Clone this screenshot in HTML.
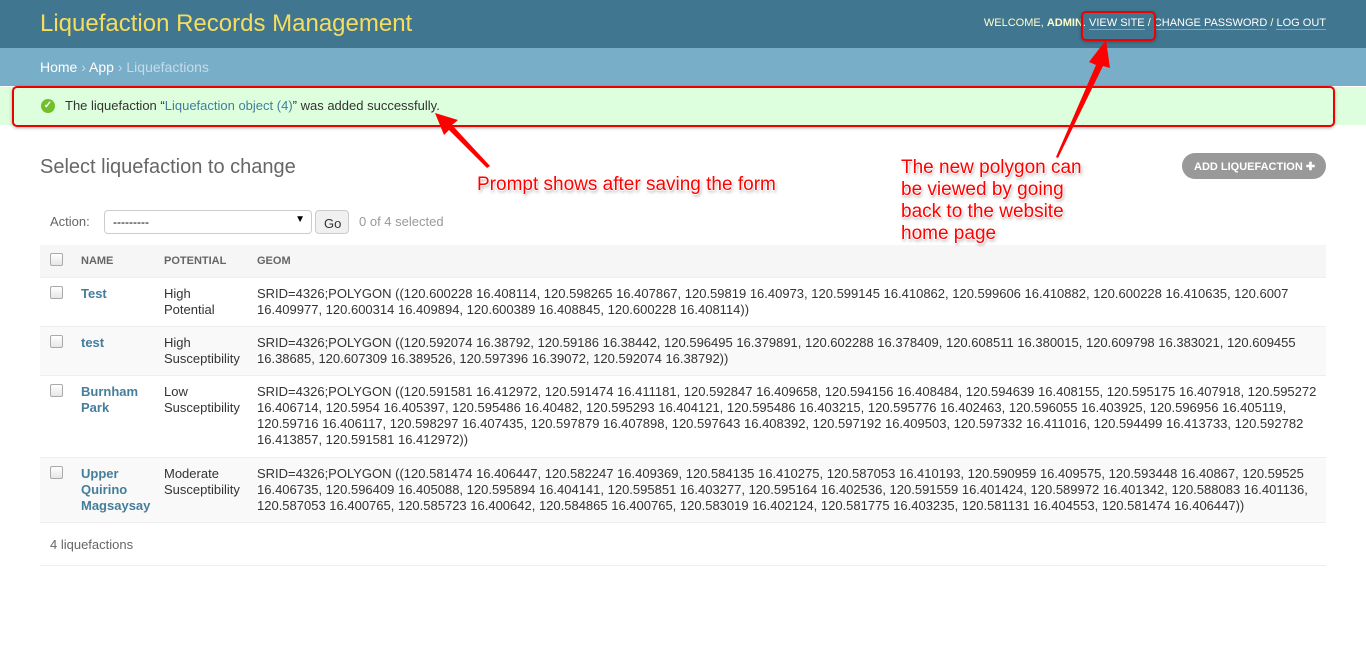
<!DOCTYPE html>
<html><head><meta charset="utf-8">
<style>
*{margin:0;padding:0;box-sizing:border-box}
body{width:1366px;height:657px;overflow:hidden;background:#fff;font-family:"Liberation Sans",Arial,sans-serif;color:#333;position:relative;font-size:13px}
#hdr{height:48px;background:#417690;position:relative}
#hdr .brand{position:absolute;left:40px;top:10px;font-size:24px;color:#f5dd5d;font-weight:300}
#hdr .tools{position:absolute;right:40px;top:17px;font-size:11px;color:#ffc}
#hdr .tools a{color:#fff;text-decoration:none;border-bottom:1px solid rgba(255,255,255,.35)}
#bc{height:38px;background:#79aec8;color:#c4dce8;font-size:14px;padding:11px 40px}
#bc a{color:#fff;text-decoration:none}
#msg{position:absolute;left:0;top:87px;width:1366px;height:38px;background:#dfd;font-size:13px;padding:11px 0 0 65px;color:#333}
#msg a{color:#447e9b}
#msg .ic{position:absolute;left:41px;top:12px;width:14px;height:14px;border-radius:50%;background:#70bf2b;color:#fff;font-size:10px;font-weight:bold;text-align:center;line-height:14px}
h1{position:absolute;left:40px;top:156px;font-size:20px;font-weight:300;color:#666}
.add{position:absolute;left:1182px;top:153px;width:144px;height:26px;border-radius:13px;background:#999;color:#fff;font-size:11px;font-weight:bold;padding:7px 0 0 12px}
.act{position:absolute;left:50px;top:214px;font-size:13px;color:#666}
.sel{position:absolute;left:104px;top:210px;width:208px;height:24px;border:1px solid #ccc;border-radius:4px;background:#fff;font-size:12px;color:#000;padding:4px 8px}
.go{position:absolute;left:315px;top:210px;width:34px;height:24px;border:1px solid #ccc;border-radius:4px;background:#f0f0f0;font-size:13px;padding:5px 0 0 8px;color:#333}
.cnt{position:absolute;left:359px;top:214px;color:#999}
table{position:absolute;left:40px;top:245px;width:1286px;border-collapse:collapse}
th{background:#f6f6f6;height:32px;text-align:left;font-size:11px;color:#666;font-weight:bold;border-bottom:1px solid #eee}
td{vertical-align:top;padding:8px 0 8px 0;line-height:16px;border-bottom:1px solid #eee;font-size:13px}
tr.alt td{background:#f9f9f9}
.cb{display:inline-block;width:13px;height:13px;border:1px solid #aaa;border-radius:2px;background:linear-gradient(#fff,#e6e6e6);margin-left:10px}
td a{color:#447e9b;font-weight:bold;text-decoration:none}
.geom{white-space:nowrap}
.foot{position:absolute;left:40px;top:522px;width:1286px;height:44px;border-bottom:1px solid #eee;padding:15px 10px;color:#666}
.ann{position:absolute;color:#f00;font-size:19px;text-shadow:-1px 0 #fff,1px 0 #fff,0 1px #fff,0 -1px #fff,1px 2px 3px rgba(0,0,0,.4);line-height:22px}
.box{position:absolute;border:2px solid #e00;border-radius:5px;box-shadow:0 1px 3px rgba(0,0,0,.3)}
</style></head><body>
<div id="hdr"><div class="brand">Liquefaction Records Management</div>
<div class="tools">WELCOME, <b>ADMIN</b>. <a>VIEW SITE</a> / <a>CHANGE PASSWORD</a> / <a>LOG OUT</a></div></div>
<div id="bc"><a>Home</a> › <a>App</a> › Liquefactions</div>
<div id="msg"><span class="ic">✓</span>The liquefaction “<a>Liquefaction object (4)</a>” was added successfully.</div>
<h1>Select liquefaction to change</h1>
<div class="add">ADD LIQUEFACTION ✚</div>
<div class="act">Action:</div>
<div class="sel">---------<span style="position:absolute;right:6px;top:3px;font-size:10px">▼</span></div>
<div class="go">Go</div>
<div class="cnt">0 of 4 selected</div>
<table>
<tr><th style="width:41px"><span class="cb"></span></th><th style="width:83px">NAME</th><th style="width:93px">POTENTIAL</th><th>GEOM</th></tr>
<tr style="height:49px"><td><span class="cb"></span></td><td><a>Test</a></td><td>High<br>Potential</td><td class="geom">SRID=4326;POLYGON ((120.600228 16.408114, 120.598265 16.407867, 120.59819 16.40973, 120.599145 16.410862, 120.599606 16.410882, 120.600228 16.410635, 120.6007<br>16.409977, 120.600314 16.409894, 120.600389 16.408845, 120.600228 16.408114))</td></tr>
<tr class="alt" style="height:49px"><td><span class="cb"></span></td><td><a>test</a></td><td>High<br>Susceptibility</td><td class="geom">SRID=4326;POLYGON ((120.592074 16.38792, 120.59186 16.38442, 120.596495 16.379891, 120.602288 16.378409, 120.608511 16.380015, 120.609798 16.383021, 120.609455<br>16.38685, 120.607309 16.389526, 120.597396 16.39072, 120.592074 16.38792))</td></tr>
<tr style="height:82px"><td><span class="cb"></span></td><td><a>Burnham<br>Park</a></td><td>Low<br>Susceptibility</td><td class="geom">SRID=4326;POLYGON ((120.591581 16.412972, 120.591474 16.411181, 120.592847 16.409658, 120.594156 16.408484, 120.594639 16.408155, 120.595175 16.407918, 120.595272<br>16.406714, 120.5954 16.405397, 120.595486 16.40482, 120.595293 16.404121, 120.595486 16.403215, 120.595776 16.402463, 120.596055 16.403925, 120.596956 16.405119,<br>120.59716 16.406117, 120.598297 16.407435, 120.597879 16.407898, 120.597643 16.408392, 120.597192 16.409503, 120.597332 16.411016, 120.594499 16.413733, 120.592782<br>16.413857, 120.591581 16.412972))</td></tr>
<tr class="alt" style="height:65px"><td><span class="cb"></span></td><td><a>Upper<br>Quirino<br>Magsaysay</a></td><td>Moderate<br>Susceptibility</td><td class="geom">SRID=4326;POLYGON ((120.581474 16.406447, 120.582247 16.409369, 120.584135 16.410275, 120.587053 16.410193, 120.590959 16.409575, 120.593448 16.40867, 120.59525<br>16.406735, 120.596409 16.405088, 120.595894 16.404141, 120.595851 16.403277, 120.595164 16.402536, 120.591559 16.401424, 120.589972 16.401342, 120.588083 16.401136,<br>120.587053 16.400765, 120.585723 16.400642, 120.584865 16.400765, 120.583019 16.402124, 120.581775 16.403235, 120.581131 16.404553, 120.581474 16.406447))</td></tr>
</table>
<div class="foot">4 liquefactions</div>
<div class="box" style="left:12px;top:86px;width:1323px;height:41px"></div>
<div class="box" style="left:1081px;top:11px;width:75px;height:30px"></div>
<svg style="position:absolute;left:0;top:0" width="1366" height="657">
<polygon points="490,166 452,125 458,120 435,113 444,135 449,130 487,168" fill="#f00"/>
<polygon points="1056,157 1096,65 1089,62 1106,40 1110,68 1103,66 1058,158" fill="#f00"/>
</svg>
<div class="ann" style="left:477px;top:174px">Prompt shows after saving the form</div>
<div class="ann" style="left:901px;top:157px">The new polygon can<br>be viewed by going<br>back to the website<br>home page</div>
</body></html>
